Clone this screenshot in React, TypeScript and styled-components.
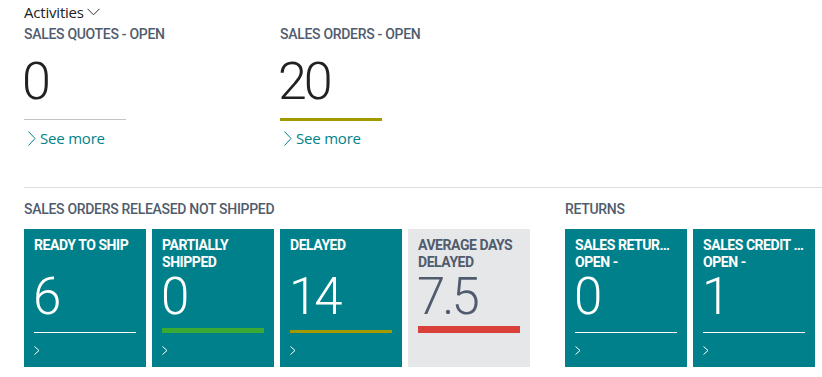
import React from "react";
import styled, { createGlobalStyle } from "styled-components";

const Global = createGlobalStyle`
  html, body { margin: 0; padding: 0; background: #ffffff; }
  body { font-family: "Open Sans", "Liberation Sans", sans-serif; }
`;

const Page = styled.div`
  width: 822px;
  height: 377px;
  overflow: hidden;
  background: #fff;
`;

const Top = styled.div`
  padding-left: 24px;
`;

const Heading = styled.div`
  display: flex;
  align-items: center;
  gap: 3px;
  height: 24px;
  font-family: "Open Sans", sans-serif;
  font-size: 15px;
  color: #212121;
  letter-spacing: -0.2px;
`;

const CueRow = styled.div`
  display: flex;
  margin-top: 2px;
`;

const Cue = styled.div`
  width: 256px;
  display: flex;
  flex-direction: column;
`;

const Caption = styled.div`
  font-family: Roboto, "Liberation Sans", sans-serif;
  font-weight: 500;
  font-size: 14px;
  line-height: 16px;
  height: 16px;
  color: #505c6d;
  white-space: nowrap;
  letter-spacing: -0.3px;
`;

const BigNumber = styled.div`
  margin-top: 14px;
  font-family: Roboto, sans-serif;
  font-weight: 300;
  font-size: 52px;
  line-height: 52px;
  height: 52px;
  margin-left: -2px;
  color: #212121;
  letter-spacing: -3px;
`;

const BarSlot = styled.div<{ $h: number }>`
  height: ${(p) => p.$h}px;
  display: flex;
  align-items: flex-end;
`;

const Bar = styled.div<{ $color: string; $thick: number; $w?: number }>`
  width: ${(p) => p.$w ?? 102}px;
  height: ${(p) => p.$thick}px;
  background: ${(p) => p.$color};
`;

const SeeMore = styled.div`
  margin-top: 7px;
  display: flex;
  align-items: center;
  gap: 4px;
  height: 20px;
  padding-left: 4px;
  font-family: "Open Sans", sans-serif;
  font-size: 15px;
  color: #00828b;
  letter-spacing: -0.2px;
`;

const Divider = styled.div`
  margin-top: 39px;
  margin-left: 24px;
  border-top: 1px solid #dddddd;
  padding-top: 13px;
  display: flex;
  gap: 35px;
`;

const Section = styled.div`
  display: flex;
  flex-direction: column;
`;

const Tiles = styled.div`
  margin-top: 12px;
  display: flex;
  gap: 6px;
`;

const Tile = styled.div<{ $gray?: boolean }>`
  width: 122px;
  height: 138px;
  box-sizing: border-box;
  padding: 8px 10px 0 10px;
  background: ${(p) => (p.$gray ? "#e6e7e9" : "#00808a")};
  color: ${(p) => (p.$gray ? "#505c6d" : "#ffffff")};
  display: flex;
  flex-direction: column;
`;

const TileTitle = styled.div`
  height: 34px;
  font-family: Roboto, "Liberation Sans", sans-serif;
  font-weight: 700;
  font-size: 14px;
  line-height: 17px;
  letter-spacing: -0.45px;
`;

const TitleLine = styled.div`
  white-space: nowrap;
  overflow: hidden;
  text-overflow: ellipsis;
`;

const TileNumber = styled.div`
  font-family: Roboto, sans-serif;
  font-weight: 300;
  font-size: 51px;
  line-height: 51px;
  height: 51px;
  margin-left: -1px;
  letter-spacing: -3px;
`;

const TileChevron = styled.div`
  margin-top: 13px;
  height: 9px;
  display: flex;
`;

const ChevronRight = ({ color, w, h }: { color: string; w: number; h: number }) => (
  <svg width={w} height={h} viewBox={`0 0 ${w} ${h}`}>
    <polyline
      points={`0.5,0.5 ${w - 1},${h / 2} 0.5,${h - 0.5}`}
      fill="none"
      stroke={color}
      strokeWidth="1"
    />
  </svg>
);

const ChevronDown = () => (
  <svg width="13" height="8" viewBox="0 0 13 8">
    <polyline points="0.5,0.8 6.5,6.8 12.5,0.8" fill="none" stroke="#333" strokeWidth="1" />
  </svg>
);

type TileData = {
  lines: string[];
  value: string;
  bar: string;
  thick: number;
  gray?: boolean;
};

const released: TileData[] = [
  { lines: ["READY TO SHIP"], value: "6", bar: "#ffffff", thick: 1 },
  { lines: ["PARTIALLY", "SHIPPED"], value: "0", bar: "#3aaa35", thick: 5 },
  { lines: ["DELAYED"], value: "14", bar: "#a39a00", thick: 3 },
  { lines: ["AVERAGE DAYS", "DELAYED"], value: "7.5", bar: "#d9413a", thick: 7, gray: true },
];

const returns: TileData[] = [
  { lines: ["SALES RETURN ORDERS", "OPEN -"], value: "0", bar: "#ffffff", thick: 1 },
  { lines: ["SALES CREDIT MEMOS", "OPEN -"], value: "1", bar: "#ffffff", thick: 1 },
];

const StatTile = ({ t }: { t: TileData }) => (
  <Tile $gray={t.gray}>
    <TileTitle>
      {t.lines.map((l) => (
        <TitleLine key={l}>{l}</TitleLine>
      ))}
    </TileTitle>
    <TileNumber>{t.value}</TileNumber>
    <BarSlot $h={11}>
      <Bar $color={t.bar} $thick={t.thick} />
    </BarSlot>
    {!t.gray && (
      <TileChevron>
        <ChevronRight color="#ffffff" w={6} h={9} />
      </TileChevron>
    )}
  </Tile>
);

export default function App() {
  return (
    <Page>
      <Global />
      <Top>
        <Heading>
          Activities
          <ChevronDown />
        </Heading>
        <CueRow>
          <Cue>
            <Caption>SALES QUOTES - OPEN</Caption>
            <BigNumber>0</BigNumber>
            <BarSlot $h={13}>
              <Bar $color="#c4c4c4" $thick={1} style={{ marginBottom: 1 }} />
            </BarSlot>
            <SeeMore>
              <ChevronRight color="#00828b" w={8} h={15} />
              See more
            </SeeMore>
          </Cue>
          <Cue>
            <Caption>SALES ORDERS - OPEN</Caption>
            <BigNumber>20</BigNumber>
            <BarSlot $h={13}>
              <Bar $color="#a39a00" $thick={3} />
            </BarSlot>
            <SeeMore>
              <ChevronRight color="#00828b" w={8} h={15} />
              See more
            </SeeMore>
          </Cue>
        </CueRow>
      </Top>
      <Divider>
        <Section>
          <Caption>SALES ORDERS RELEASED NOT SHIPPED</Caption>
          <Tiles>
            {released.map((t) => (
              <StatTile key={t.lines.join()} t={t} />
            ))}
          </Tiles>
        </Section>
        <Section>
          <Caption>RETURNS</Caption>
          <Tiles>
            {returns.map((t) => (
              <StatTile key={t.lines.join()} t={t} />
            ))}
          </Tiles>
        </Section>
      </Divider>
    </Page>
  );
}
